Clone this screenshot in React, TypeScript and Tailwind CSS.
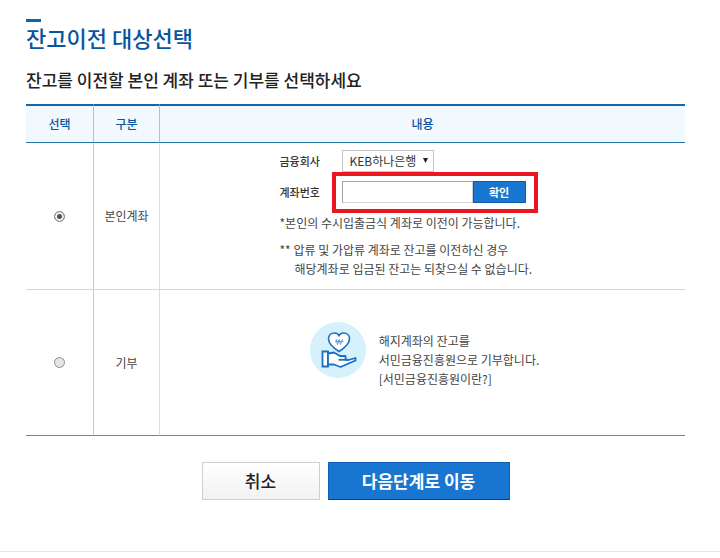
import React, { useState } from 'react';

const DonationIcon: React.FC = () => (
  <svg width="58" height="58" viewBox="0 0 58 58" fill="none" className="shrink-0" aria-hidden="true">
    <circle cx="29" cy="29" r="28" fill="#d5f1fc" />
    <path
      d="M30 30.500C26 28 19.500 23.500 19.500 17.800C19.500 14.400 22 12 25.500 12C27.600 12 29.200 13 30 14.500C30.800 13 32.400 12 34.500 12C38 12 40.500 14.400 40.500 17.800C40.500 23.500 34 28 30 30.500Z"
      fill="#fff"
      stroke="#1a6fc0"
      strokeWidth="1.6"
    />
    <path d="M27 18L28.500 23.500L30 18.500L31.500 23.500L33.500 18M26 20.500H34.500" stroke="#5a9bd8" strokeWidth="1" />
    <path d="M13.500 30.500H19V45.500H13.500Z" fill="#fff" stroke="#1a6fc0" strokeWidth="1.8" />
    <path
      d="M19 32.500L25 31.500L31 35H36.500V38.500L39.500 39L46.500 37V39.500L31.500 46L25 43.500H19Z"
      fill="#fff"
      stroke="#1a6fc0"
      strokeWidth="1.8"
      strokeLinejoin="round"
    />
    <path d="M29.500 38.800H39" stroke="#1a6fc0" strokeWidth="1.8" />
  </svg>
);

const radioClass =
  'block mx-auto w-[11px] h-[11px] appearance-none rounded-full border border-[#8f8f8f] bg-[#e4e4e4] checked:bg-[#505050] checked:shadow-[inset_0_0_0_2px_#f4f4f4]';

export default function App() {
  const [target, setTarget] = useState('account');
  const [account, setAccount] = useState('');

  return (
    <div className="bg-white font-['Noto_Sans_CJK_KR',sans-serif] text-[#444]">
      <main className="pl-[26px] pr-[35px] pt-[19px] pb-[51px] border-b border-[#e6e6e6]">
        <div className="w-[15px] h-[3px] bg-[#0a66ad]" />
        <h1 className="text-[22px] leading-[30px] font-medium text-[#0755a0]">잔고이전 대상선택</h1>
        <h2 className="mt-[14px] text-[17px] leading-7 font-medium text-[#222]">
          잔고를 이전할 본인 계좌 또는 기부를 선택하세요
        </h2>

        <table className="mt-[10px] w-full table-fixed border-separate border-spacing-0 text-center text-xs">
          <thead>
            <tr className="h-[39px] bg-[#f1f8fe] text-[#0755a0]">
              <th scope="col" className="w-[67px] border-t-2 border-b border-t-[#1468a5] border-b-[#2574aa] font-medium">선택</th>
              <th scope="col" className="w-[66px] border-t-2 border-b border-l border-t-[#1468a5] border-b-[#2574aa] border-l-[#9cc8ee] font-medium">구분</th>
              <th scope="col" className="border-t-2 border-b border-l border-t-[#1468a5] border-b-[#2574aa] border-l-[#9cc8ee] font-medium">내용</th>
            </tr>
          </thead>
          <tbody>
            <tr className="h-[147px]">
              <td className="border-b border-[#c5dcec]">
                <input
                  id="target-account"
                  type="radio"
                  name="target"
                  checked={target === 'account'}
                  onChange={() => setTarget('account')}
                  className={radioClass}
                />
              </td>
              <td className="border-b border-l border-b-[#c5dcec] border-l-[#b4cfe2]">
                <label htmlFor="target-account">본인계좌</label>
              </td>
              <td className="border-b border-l border-b-[#c5dcec] border-l-[#cfe1f0]">
                <div className="mx-auto w-[286px] pb-1 text-left">
                  <div className="flex items-center">
                    <label htmlFor="bank" className="w-[62px] text-[11px] font-medium text-[#333]">금융회사</label>
                    <div className="relative">
                      <select
                        id="bank"
                        className="block w-[92px] h-[22px] pl-[7px] appearance-none border border-[#c4c4c4] bg-white text-xs leading-5 text-[#333]"
                      >
                        <option>KEB하나은행</option>
                      </select>
                      <svg width="5" height="5" viewBox="0 0 5 5" className="absolute right-[6px] top-2 pointer-events-none">
                        <path d="M0 0H5L2.500 5Z" fill="#222" />
                      </svg>
                    </div>
                  </div>
                  <div className="mt-[9px] flex items-center">
                    <label htmlFor="account-number" className="w-[62px] text-[11px] font-medium text-[#333]">계좌번호</label>
                    <div className="relative flex">
                      <input
                        id="account-number"
                        type="text"
                        value={account}
                        onChange={(e) => setAccount(e.target.value)}
                        className="w-[131px] h-[22px] px-2 border border-t-[#a5a5a5] border-l-[#a5a5a5] border-r-[#d0d0d0] border-b-[#d8d8d8] bg-white outline-none"
                      />
                      <button
                        type="button"
                        className="w-[53px] h-[22px] border border-[#0f5ba8] bg-[#1976d0] text-[11px] leading-5 font-bold text-white"
                      >
                        확인
                      </button>
                      <div className="absolute -left-[10px] -right-3 -top-[9px] -bottom-[10px] border-4 border-[#ea1620] pointer-events-none" />
                    </div>
                  </div>
                  <p className="mt-[10px] leading-[19px]">*본인의 수시입출금식 계좌로 이전이 가능합니다.</p>
                  <p className="mt-2 leading-[19px]">** 압류 및 가압류 계좌로 잔고를 이전하신 경우</p>
                  <p className="pl-[15px] leading-[19px]">해당계좌로 입금된 잔고는 되찾으실 수 없습니다.</p>
                </div>
              </td>
            </tr>
            <tr className="h-[146px]">
              <td className="border-b border-[#4a8fc0]">
                <input
                  id="target-donation"
                  type="radio"
                  name="target"
                  checked={target === 'donation'}
                  onChange={() => setTarget('donation')}
                  className={radioClass}
                />
              </td>
              <td className="border-b border-l border-b-[#4a8fc0] border-l-[#b4cfe2]">
                <label htmlFor="target-donation">기부</label>
              </td>
              <td className="border-b border-l border-b-[#4a8fc0] border-l-[#cfe1f0]">
                <div className="flex justify-center gap-3 pl-[3px] pb-4 text-left leading-[19px]">
                  <DonationIcon />
                  <div className="pt-[10px]">
                    <p>해지계좌의 잔고를</p>
                    <p>서민금융진흥원으로 기부합니다.</p>
                    <a href="#about">[서민금융진흥원이란?]</a>
                  </div>
                </div>
              </td>
            </tr>
          </tbody>
        </table>

        <div className="mt-[26px] flex justify-center gap-2 text-[17px]">
          <button
            type="button"
            className="w-[118px] h-[38px] border border-[#cfcfcf] bg-linear-to-b from-white to-[#f2f2f2] font-medium text-[#222]"
          >
            취소
          </button>
          <button
            type="button"
            className="w-[182px] h-[38px] border border-[#0e5fb0] border-b-[#093f86] bg-[#1976d0] font-bold text-white"
          >
            다음단계로 이동
          </button>
        </div>
      </main>
    </div>
  );
}
